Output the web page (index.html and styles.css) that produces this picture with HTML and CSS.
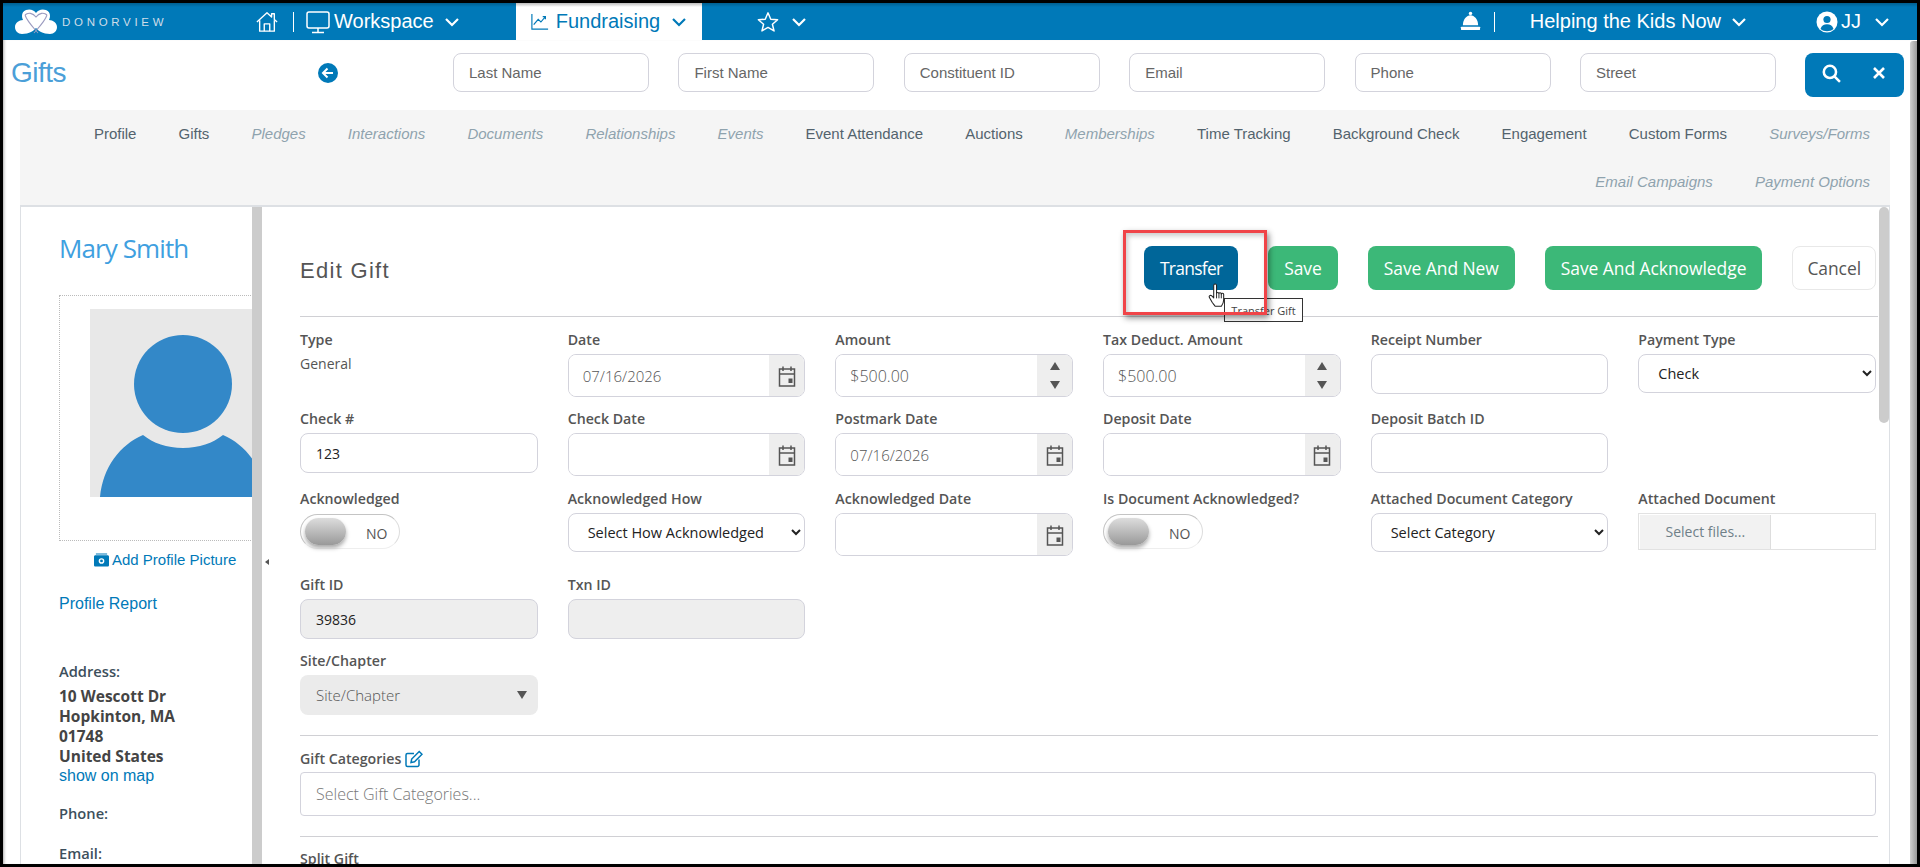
FILE: index.html
```html
<!DOCTYPE html>
<html lang="en">
<head>
    <meta charset="UTF-8">
    <title>Edit Gift</title>
    <link rel="stylesheet" href="styles.css">
</head>
<body>
    <div class="window">
        <nav class="topnav">
            <div class="brand">
                <svg class="brand-logo" viewBox="0 0 42 26" width="42" height="26">
                    <path d="M11 1c4-1.500 8 0 10 3 2-3 6-4.500 10-3 4 1.500 5 6 3 10 4 0 8 3 8 7 0 4-3 7-7 7-3 0-7-1-9-2-2-1-3-2-5-4-2 2-3 3-5 4-2 1-6 2-9 2-4 0-7-3-7-7 0-4 4-7 8-7-2-4-1-8.500 3-10z" fill="#fff"/>
                    <path d="M10 6c2 6 7 11 13 18M32 6c-2 6-7 11-13 18M10 6c3-3 8-2 11 2 3-4 8-5 11-2" fill="none" stroke="#9c9cc0" stroke-width="1.100"/>
                </svg>
                <span class="brand-name">DONORVIEW</span>
            </div>
            <svg class="nav-icon" viewBox="0 0 24 24" width="22" height="24" fill="none" stroke="#fff" stroke-width="1.500" stroke-linejoin="round">
                <path d="M1 12 12 2l5 4.500V3h3v6.200l3 2.800"/>
                <path d="M4 10v12h16V10"/>
                <path d="M9 22v-8h6v8"/>
            </svg>
            <span class="nav-sep nav-sep-home"></span>
            <svg class="nav-icon nav-monitor" viewBox="0 0 24 24" width="24" height="24" fill="none" stroke="#fff" stroke-width="1.500" stroke-linejoin="round">
                <rect x="1" y="2" width="22" height="16" rx="2"/>
                <path d="M12 18v4M6 22.500h12"/>
            </svg>
            <span class="nav-text nav-workspace">Workspace</span>
            <svg class="chevron chevron-workspace" viewBox="0 0 16 10" width="16" height="10"><path d="M2 2l6 6 6-6"/></svg>
            <div class="nav-tab">
                <svg viewBox="0 0 20 20" width="18" height="18" fill="none" stroke="#0079b8" stroke-width="1.300">
                    <path d="M1 1v17h18"/>
                    <path d="M3 13l5-6 3 3 5-6M13 4h3v3"/>
                </svg>
                <span class="nav-text">Fundraising</span>
                <svg class="chevron chevron-blue" viewBox="0 0 16 10" width="16" height="10"><path d="M2 2l6 6 6-6"/></svg>
            </div>
            <svg class="nav-star" viewBox="0 0 24 24" width="22" height="22" fill="none" stroke="#fff" stroke-width="1.600" stroke-linejoin="round">
                <path d="M12 2l3 7 7.500.6-5.700 4.900 1.800 7.300L12 17.900l-6.600 3.900 1.800-7.300L1.500 9.600 9 9z"/>
            </svg>
            <svg class="chevron chevron-star" viewBox="0 0 16 10" width="16" height="10"><path d="M2 2l6 6 6-6"/></svg>
            <div class="nav-right">
                <svg viewBox="0 0 22 22" width="21" height="21" fill="#fff">
                    <circle cx="11" cy="2.500" r="1.800"/>
                    <path d="M3 15C3 9 7 4.500 11 4.500S19 9 19 15z"/>
                    <rect x="1" y="16.500" width="20" height="3.500" rx=".5"/>
                </svg>
                <span class="nav-sep nav-sep-bell"></span>
                <span class="nav-text">Helping the Kids Now</span>
                <svg class="chevron chevron-org" viewBox="0 0 16 10" width="16" height="10"><path d="M2 2l6 6 6-6"/></svg>
                <svg class="nav-user" viewBox="0 0 22 22" width="22" height="22">
                    <circle cx="11" cy="11" r="10.500" fill="#fff"/>
                    <circle cx="11" cy="8.500" r="3.600" fill="#0079b8"/>
                    <path d="M4.500 18c1-3.500 3.500-4.800 6.500-4.800s5.500 1.300 6.500 4.800c-3.500 3-9.500 3-13 0z" fill="#0079b8"/>
                </svg>
                <span class="nav-text nav-initials">JJ</span>
                <svg class="chevron chevron-user" viewBox="0 0 16 10" width="16" height="10"><path d="M2 2l6 6 6-6"/></svg>
            </div>
        </nav>

        <div class="page">
            <div class="page-main">
                <header class="search-row">
                    <h1 class="page-title">Gifts</h1>
                    <svg class="back-icon" viewBox="0 0 20 20" width="20" height="20">
                        <circle cx="10" cy="10" r="10" fill="#0079b8"/>
                        <path d="M15 10H5.500M9.500 5.500 5 10l4.500 4.500" fill="none" stroke="#fff" stroke-width="2"/>
                    </svg>
                    <div class="search-fields">
                        <input class="search-input" placeholder="Last Name">
                        <input class="search-input" placeholder="First Name">
                        <input class="search-input" placeholder="Constituent ID">
                        <input class="search-input" placeholder="Email">
                        <input class="search-input" placeholder="Phone">
                        <input class="search-input" placeholder="Street">
                    </div>
                    <div class="search-btn">
                        <svg viewBox="0 0 18 18" width="19" height="19" fill="none" stroke="#fff" stroke-width="2.400">
                            <circle cx="7.500" cy="7.500" r="5.800"/>
                            <path d="M12 12l5 5"/>
                        </svg>
                        <svg viewBox="0 0 14 14" width="14" height="14" fill="none" stroke="#fff" stroke-width="2.600">
                            <path d="M2 2l10 10M12 2 2 12"/>
                        </svg>
                    </div>
                </header>

                <div class="panel">
                    <div class="tabs">
                        <a class="tab">Profile</a>
                        <a class="tab">Gifts</a>
                        <a class="tab tab-off">Pledges</a>
                        <a class="tab tab-off">Interactions</a>
                        <a class="tab tab-off">Documents</a>
                        <a class="tab tab-off">Relationships</a>
                        <a class="tab tab-off">Events</a>
                        <a class="tab">Event Attendance</a>
                        <a class="tab">Auctions</a>
                        <a class="tab tab-off">Memberships</a>
                        <a class="tab">Time Tracking</a>
                        <a class="tab">Background Check</a>
                        <a class="tab">Engagement</a>
                        <a class="tab">Custom Forms</a>
                        <a class="tab tab-off">Surveys/Forms</a>
                        <a class="tab tab-off">Email Campaigns</a>
                        <a class="tab tab-off">Payment Options</a>
                    </div>

                    <div class="panel-body">
                        <aside class="sidebar">
                            <h2 class="person-name">Mary Smith</h2>
                            <div class="photo-box">
                                <svg class="photo" viewBox="0 0 186 188" width="186" height="188">
                                    <rect width="186" height="188" fill="#e8e8e8"/>
                                    <circle cx="93" cy="75" r="49" fill="#3388c8"/>
                                    <path d="M10 188c3-30 20-52 43-62 10 8 24 13 40 13s30-5 40-13c23 10 40 32 43 62z" fill="#3388c8"/>
                                </svg>
                            </div>
                            <a class="add-photo">
                                <svg viewBox="0 0 16 14" width="15" height="14">
                                    <path d="M1.500 2h13c.8 0 1.500.7 1.500 1.500v9c0 .8-.7 1.500-1.500 1.500h-13C.7 14 0 13.300 0 12.500v-9C0 2.700.7 2 1.500 2zM2 0h12v1H2z" fill="#0079b8"/>
                                    <circle cx="8" cy="8" r="3" fill="#fff"/>
                                    <circle cx="8" cy="8" r="1.500" fill="#0079b8"/>
                                </svg>
                                Add Profile Picture
                            </a>
                            <a class="report-link">Profile Report</a>
                            <div class="info-label info-address">Address:</div>
                            <div class="address-line">10 Wescott Dr</div>
                            <div class="address-line">Hopkinton, MA</div>
                            <div class="address-line">01748</div>
                            <div class="address-line">United States</div>
                            <a class="map-link">show on map</a>
                            <div class="info-label info-phone">Phone:</div>
                            <div class="info-label info-email">Email:</div>
                        </aside>

                        <div class="divider"><span class="divider-arrow"></span></div>

                        <main class="form-area">
                            <div class="form-head">
                                <h2 class="form-title">Edit Gift</h2>
                                <div class="form-actions">
                                    <button class="btn btn-blue">Transfer</button>
                                    <button class="btn btn-green">Save</button>
                                    <button class="btn btn-green">Save And New</button>
                                    <button class="btn btn-green">Save And Acknowledge</button>
                                    <button class="btn btn-cancel">Cancel</button>
                                </div>
                            </div>

                            <div class="form-grid">
                                <div class="field">
                                    <label>Type</label>
                                    <div class="static-value">General</div>
                                </div>
                                <div class="field">
                                    <label>Date</label>
                                    <div class="input-group">
                                        <input value="07/16/2026">
                                        <span class="addon"><svg class="cal" viewBox="0 0 18 22" width="18" height="22"><use href="#cal"/></svg></span>
                                    </div>
                                </div>
                                <div class="field">
                                    <label>Amount</label>
                                    <div class="input-group">
                                        <input class="money" value="$500.00">
                                        <span class="addon addon-spin"><i class="tri-up"></i><i class="tri-down"></i></span>
                                    </div>
                                </div>
                                <div class="field">
                                    <label>Tax Deduct. Amount</label>
                                    <div class="input-group">
                                        <input class="money" value="$500.00">
                                        <span class="addon addon-spin"><i class="tri-up"></i><i class="tri-down"></i></span>
                                    </div>
                                </div>
                                <div class="field">
                                    <label>Receipt Number</label>
                                    <input class="text-input">
                                </div>
                                <div class="field">
                                    <label>Payment Type</label>
                                    <select class="select-input"><option>Check</option></select>
                                </div>

                                <div class="field">
                                    <label>Check #</label>
                                    <input class="text-input dark-value" value="123">
                                </div>
                                <div class="field">
                                    <label>Check Date</label>
                                    <div class="input-group">
                                        <input>
                                        <span class="addon"><svg class="cal" viewBox="0 0 18 22" width="18" height="22"><use href="#cal"/></svg></span>
                                    </div>
                                </div>
                                <div class="field">
                                    <label>Postmark Date</label>
                                    <div class="input-group">
                                        <input value="07/16/2026">
                                        <span class="addon"><svg class="cal" viewBox="0 0 18 22" width="18" height="22"><use href="#cal"/></svg></span>
                                    </div>
                                </div>
                                <div class="field">
                                    <label>Deposit Date</label>
                                    <div class="input-group">
                                        <input>
                                        <span class="addon"><svg class="cal" viewBox="0 0 18 22" width="18" height="22"><use href="#cal"/></svg></span>
                                    </div>
                                </div>
                                <div class="field span-2">
                                    <label>Deposit Batch ID</label>
                                    <input class="text-input half-input">
                                </div>

                                <div class="field">
                                    <label>Acknowledged</label>
                                    <div class="toggle"><span class="knob"></span><span class="toggle-text">NO</span></div>
                                </div>
                                <div class="field">
                                    <label>Acknowledged How</label>
                                    <select class="select-input"><option>Select How Acknowledged</option></select>
                                </div>
                                <div class="field">
                                    <label>Acknowledged Date</label>
                                    <div class="input-group">
                                        <input>
                                        <span class="addon"><svg class="cal" viewBox="0 0 18 22" width="18" height="22"><use href="#cal"/></svg></span>
                                    </div>
                                </div>
                                <div class="field">
                                    <label>Is Document Acknowledged?</label>
                                    <div class="toggle"><span class="knob"></span><span class="toggle-text">NO</span></div>
                                </div>
                                <div class="field">
                                    <label>Attached Document Category</label>
                                    <select class="select-input"><option>Select Category</option></select>
                                </div>
                                <div class="field">
                                    <label>Attached Document</label>
                                    <div class="upload"><span class="upload-btn">Select files...</span></div>
                                </div>

                                <div class="field">
                                    <label>Gift ID</label>
                                    <input class="text-input readonly dark-value" value="39836">
                                </div>
                                <div class="field span-5">
                                    <label>Txn ID</label>
                                    <input class="text-input readonly txn-input">
                                </div>

                                <div class="field span-6">
                                    <label>Site/Chapter</label>
                                    <div class="site-select">Site/Chapter<i class="tri-down"></i></div>
                                </div>
                            </div>

                            <hr class="form-rule">
                            <div class="categories">
                                <label>Gift Categories
                                    <svg viewBox="0 0 18 18" width="18" height="18" fill="none" stroke="#0079b8" stroke-width="1.500">
                                        <path d="M14 9.500V15a1.500 1.500 0 0 1-1.500 1.500H2.500A1.500 1.500 0 0 1 1 15V5a1.500 1.500 0 0 1 1.500-1.500H9"/>
                                        <path d="M6 12.500l.7-3.500 7.500-7.500 2.800 2.800-7.500 7.500z"/>
                                    </svg>
                                </label>
                                <input class="categories-input" placeholder="Select Gift Categories...">
                            </div>
                            <hr class="form-rule form-rule-split">
                            <label class="split-label">Split Gift</label>
                        </main>

                        <div class="form-scroll"><span class="form-thumb"></span></div>
                    </div>
                </div>
            </div>
            <div class="page-scroll"></div>
        </div>

        <div class="tooltip">Transfer Gift</div>
        <div class="callout"></div>
        <svg class="hand" viewBox="0 0 20 26" width="19" height="25">
            <path d="M6 2.500c0-2 3-2 3 0V11c0-1.500 2.500-1.500 2.500 0 0-1.200 2.500-1.200 2.500.3 0-1 2.500-1 2.500.5v6c0 3-1.500 5-2.500 6.500H7.500c-1-1.500-2-2.500-3-4L1.500 15c-1-1.500 1-3 2.500-1.500L6 15.500z" fill="#fff" stroke="#222" stroke-width="1.100" stroke-linejoin="round"/>
            <path d="M9 11v5M11.500 11v5M14 11.300V16" stroke="#222" fill="none"/>
        </svg>
    </div>

    <svg class="defs" width="0" height="0">
        <symbol id="cal" viewBox="0 0 18 22">
            <path d="M1.500 4h15v17h-15zM1.500 9h15M5 1.500V6M13 1.500V6" fill="none" stroke="#555" stroke-width="1.500"/>
            <rect x="10.500" y="13.500" width="4" height="4.500" fill="#555"/>
        </symbol>
    </svg>
</body>
</html>
```

FILE: styles.css
```css
* {
    box-sizing: border-box;
}

html, body {
    margin: 0;
    height: 100%;
}

body {
    background-color: black;
    padding: 3px;
    overflow: hidden;
    font-family: "Open Sans", "Liberation Sans", sans-serif;
    color: #555;
}

.window {
    position: relative;
    height: 861px;
    display: flex;
    flex-direction: column;
    background-color: white;
    overflow: hidden;
}

.defs {
    position: absolute;
}

/* top bar */
.topnav {
    flex: none;
    height: 37px;
    display: flex;
    align-items: center;
    background: linear-gradient(#005f90 0, #0079b8 4px);
    font-family: "Liberation Sans", Arial, sans-serif;
    color: white;
}

.brand {
    width: 241px;
    margin-left: 12px;
    display: flex;
    align-items: center;
    gap: 5px;
}

.brand-name {
    font-size: 11.5px;
    letter-spacing: 3.7px;
    color: #cfdde8;
}

.nav-icon {
    flex: none;
}

.nav-sep {
    width: 1px;
    height: 20px;
    background-color: white;
}

.nav-sep-home {
    margin-left: 15px;
}

.nav-monitor {
    margin-left: 12px;
}

.nav-text {
    font-size: 20px;
    white-space: nowrap;
}

.nav-workspace {
    margin-left: 4px;
}

.chevron {
    flex: none;
    fill: none;
    stroke: white;
    stroke-width: 2.2;
}

.chevron-blue {
    stroke: #0079b8;
}

.chevron-workspace {
    margin-left: 10px;
}

.nav-tab {
    width: 186px;
    height: 37px;
    margin-left: 56px;
    padding-left: 15px;
    display: flex;
    align-items: center;
    gap: 7px;
    background: linear-gradient(#bbb 0, white 4px);
    color: #0079b8;
}

.nav-tab .chevron {
    margin-left: 4px;
}

.nav-star {
    margin-left: 55px;
}

.chevron-star {
    margin-left: 12px;
}

.nav-right {
    margin-left: auto;
    padding-right: 27px;
    display: flex;
    align-items: center;
}

.nav-sep-bell {
    margin-left: 13px;
    margin-right: 35px;
}

.chevron-org {
    margin-left: 10px;
}

.nav-user {
    margin-left: 69px;
}

.nav-initials {
    margin-left: 3px;
}

.chevron-user {
    margin-left: 13px;
}

/* page */
.page {
    flex: 1;
    min-height: 0;
    display: flex;
    box-shadow: inset 3px 0 3px -2px #aaa;
}

.page-main {
    flex: 1;
    min-width: 0;
    display: flex;
    flex-direction: column;
}

.page-scroll {
    flex: none;
    width: 7px;
    margin-top: 1px;
    border-radius: 3px 0 0 0;
    background: linear-gradient(90deg, #d0d0d0, #999);
}

.search-row {
    flex: none;
    height: 70px;
    padding: 13px 0 0 8px;
    display: flex;
    font-family: "Liberation Sans", Arial, sans-serif;
}

.page-title {
    width: 307px;
    margin: 2px 0 0 0;
    font-size: 28px;
    line-height: 36px;
    font-weight: normal;
    letter-spacing: -0.5px;
    color: #4b9fd8;
}

.back-icon {
    flex: none;
    margin-top: 10px;
}

.search-fields {
    margin-left: 115px;
    display: flex;
    gap: 29.4px;
}

.search-input {
    width: 196px;
    height: 39px;
    padding: 0 15px;
    border: 1px solid #d3d3dc;
    border-radius: 8px;
    font: 15px "Liberation Sans", Arial, sans-serif;
}

.search-input::placeholder {
    color: #666;
    opacity: 1;
}

.search-btn {
    width: 99px;
    height: 44px;
    margin-left: 29px;
    padding: 0 18px 4px 17px;
    display: flex;
    align-items: center;
    justify-content: space-between;
    border-radius: 8px;
    background-color: #0079b8;
}

/* tabs and panel */
.panel {
    flex: 1;
    min-height: 0;
    width: 1870px;
    margin-left: 17px;
    display: flex;
    flex-direction: column;
}

.tabs {
    flex: none;
    height: 97px;
    padding: 0 20px 0 60px;
    display: flex;
    flex-wrap: wrap;
    justify-content: flex-end;
    align-content: flex-start;
    column-gap: 42.1px;
    background-color: #f5f5f5;
    border-bottom: 2px solid #dde0e4;
    font-family: "Liberation Sans", Arial, sans-serif;
    font-size: 15px;
    color: #53636d;
}

.tab {
    height: 48px;
    line-height: 48px;
}

.tab-off {
    font-style: italic;
    color: #8fa3ae;
}

.panel-body {
    flex: 1;
    min-height: 0;
    display: flex;
    border-left: 1px solid #dde0e4;
    border-right: 1px solid #dde0e4;
}

/* left column */
.sidebar {
    flex: none;
    width: 231px;
    padding-left: 38px;
    overflow: hidden;
}

.person-name {
    margin: 23px 0 0 0;
    font-size: 26px;
    line-height: 36px;
    font-weight: normal;
    letter-spacing: -0.9px;
    white-space: nowrap;
    color: #3fa0e0;
}

.photo-box {
    width: 300px;
    height: 246px;
    margin-top: 29px;
    padding: 13px 0 0 30px;
    border: 1px dotted #bbb;
}

.photo {
    display: block;
}

.add-photo {
    margin: 8px 0 0 35px;
    display: flex;
    align-items: center;
    gap: 3px;
    font: 15px/22px "Liberation Sans", Arial, sans-serif;
    color: #0079b8;
    white-space: nowrap;
}

.report-link {
    display: block;
    margin-top: 21px;
    font: 16px/24px "Liberation Sans", Arial, sans-serif;
    color: #0079b8;
}

.info-label {
    font-size: 14.7px;
    font-weight: 600;
    line-height: 20px;
    color: #3d4f5c;
}

.info-address {
    margin-top: 45px;
    margin-bottom: 5px;
}

.address-line {
    font-size: 15.5px;
    font-weight: 700;
    line-height: 20px;
    color: #444;
}

.map-link {
    display: block;
    font: 16px/20px "Liberation Sans", Arial, sans-serif;
    color: #0079b8;
}

.info-phone {
    margin-top: 17px;
}

.info-email {
    margin-top: 20px;
}

.divider {
    flex: none;
    position: relative;
    width: 10px;
    background-color: #ccc;
}

.divider-arrow {
    position: absolute;
    top: 352px;
    left: 13px;
    border: 3px solid transparent;
    border-left-width: 0;
    border-right: 4px solid #555;
}

/* form */
.form-area {
    flex: 1;
    min-width: 0;
    padding: 0 3px 0 38px;
    overflow: hidden;
}

.form-head {
    height: 110px;
    padding-top: 39px;
    display: flex;
    justify-content: space-between;
    border-bottom: 1px solid #d0d0d4;
    margin-right: -2px;
}

.form-title {
    margin: 8px 0 0 0;
    font: 22px/34px "Liberation Sans", Arial, sans-serif;
    letter-spacing: 1.3px;
    color: #555;
}

.form-actions {
    display: flex;
    gap: 30px;
    margin-right: 2px;
}

.btn {
    height: 44px;
    padding: 0 16px;
    border: none;
    border-radius: 8px;
    font: 17.45px "Open Sans", sans-serif;
    letter-spacing: -0.05px;
    color: white;
}

.btn-blue {
    width: 94px;
    padding: 0;
    letter-spacing: -0.7px;
    background-color: #006699;
}

.btn-green {
    background-color: #3cb878;
}

.btn-cancel {
    padding: 0 14px;
    background-color: white;
    border: 1px solid #e8e8e8;
    color: #555;
}

.form-grid {
    display: grid;
    grid-template-columns: repeat(6, minmax(0, 1fr));
    grid-template-rows: 79px 80px 86px 76px 64px;
    column-gap: 30px;
    margin-top: 13px;
}

.span-2 {
    grid-column: span 2;
}

.span-5 {
    grid-column: span 5;
}

.span-6 {
    grid-column: span 6;
}

label {
    display: block;
    margin-bottom: 4px;
    font-size: 14.2px;
    line-height: 20px;
    font-weight: 600;
    white-space: nowrap;
    color: #555;
}

.static-value {
    margin-top: 4px;
    font-size: 14px;
    line-height: 20px;
    color: #555;
}

input {
    font-family: "Open Sans", sans-serif;
}

.text-input {
    display: block;
    width: 100%;
    height: 40px;
    padding: 0 15px;
    border: 1px solid #d3d3dc;
    border-radius: 8px;
    font-size: 15px;
    font-weight: 300;
    color: #555;
}

.half-input {
    width: calc(50% - 15px);
}

.txn-input {
    width: calc((100% - 120px) / 5);
}

.dark-value {
    font-size: 14px;
    font-weight: 400;
    color: #222;
}

.readonly {
    background-color: #eee;
}

.input-group {
    display: flex;
    height: 43px;
    border: 1px solid #d3d3dc;
    border-radius: 8px;
    overflow: hidden;
}

.input-group input {
    flex: 1;
    min-width: 0;
    padding: 0 14px;
    border: none;
    font-size: 15px;
    font-weight: 300;
    color: #555;
}

.input-group .money {
    font-size: 16px;
}

.addon {
    flex: none;
    width: 35px;
    display: flex;
    align-items: center;
    justify-content: center;
    background-color: #eee;
}

.addon-spin {
    flex-direction: column;
    gap: 11px;
}

.tri-up,
.tri-down {
    display: block;
    border-left: 5px solid transparent;
    border-right: 5px solid transparent;
}

.tri-up {
    border-bottom: 8px solid #555;
}

.tri-down {
    border-top: 8px solid #555;
}

.select-input {
    display: block;
    width: 100%;
    height: 39px;
    padding: 0 15px;
    border: 1px solid #d3d3dc;
    border-radius: 8px;
    background-color: white;
    font: 14.5px "Open Sans", sans-serif;
    color: #222;
}

.toggle {
    position: relative;
    width: 100px;
    height: 35px;
    margin-top: 5px;
    padding: 0 0 0 65px;
    line-height: 37px;
    border: 1px solid #c4c4c4;
    border-bottom-color: #eee;
    border-right-color: #ddd;
    border-radius: 18px;
    font-size: 14px;
    color: #555;
}

.knob {
    position: absolute;
    top: 3px;
    left: 4px;
    width: 41px;
    height: 27px;
    border-radius: 14px;
    background: linear-gradient(#ddd, #999);
    box-shadow: 0 3px 4px #aaa;
}

.upload {
    height: 37px;
    padding: 1px;
    border: 1px solid #e2e2e2;
}

.upload-btn {
    display: block;
    width: 131px;
    height: 34px;
    line-height: 34px;
    text-align: center;
    border-right: 1px solid #ddd;
    background-color: #f2f2f2;
    font-size: 14px;
    color: #6f8088;
}

.site-select {
    width: calc((100% - 150px) / 6);
    height: 40px;
    padding: 0 11px 0 16px;
    display: flex;
    align-items: center;
    justify-content: space-between;
    border-radius: 8px;
    background-color: #ebebeb;
    font-size: 15px;
    font-weight: 300;
    color: #555;
}

.form-rule {
    height: 1px;
    margin: 20px -2px 0 0;
    border: none;
    background-color: #d0d0d4;
}

.form-rule-split {
    margin-top: 20px;
}

.categories {
    margin-top: 13px;
}

.categories label {
    display: flex;
    align-items: center;
    gap: 4px;
    margin-bottom: 3px;
}

.categories-input {
    display: block;
    width: 100%;
    height: 44px;
    padding: 0 15px;
    border: 1px solid #d3d3dc;
    border-radius: 4px;
    font-size: 16px;
    font-weight: 300;
}

.categories-input::placeholder {
    color: #777;
    opacity: 1;
}

.split-label {
    margin-top: 12px;
}

.form-scroll {
    flex: none;
    width: 10px;
}

.form-thumb {
    display: block;
    height: 216px;
    border-radius: 5px;
    background-color: #ccc;
}

/* things on top of the form */
.tooltip {
    position: absolute;
    left: 1221px;
    top: 295px;
    width: 79px;
    height: 24px;
    line-height: 24px;
    text-align: center;
    border: 1px solid #333;
    background-color: white;
    font-size: 11px;
    color: #444;
}

.callout {
    position: absolute;
    left: 1120px;
    top: 227px;
    width: 144px;
    height: 85px;
    border: 3px solid #f04448;
    box-shadow: 2px 3px 6px rgba(0, 0, 0, 0.45), inset 2px 3px 5px rgba(0, 0, 0, 0.2);
}

.hand {
    position: absolute;
    left: 1205px;
    top: 280px;
}
```
